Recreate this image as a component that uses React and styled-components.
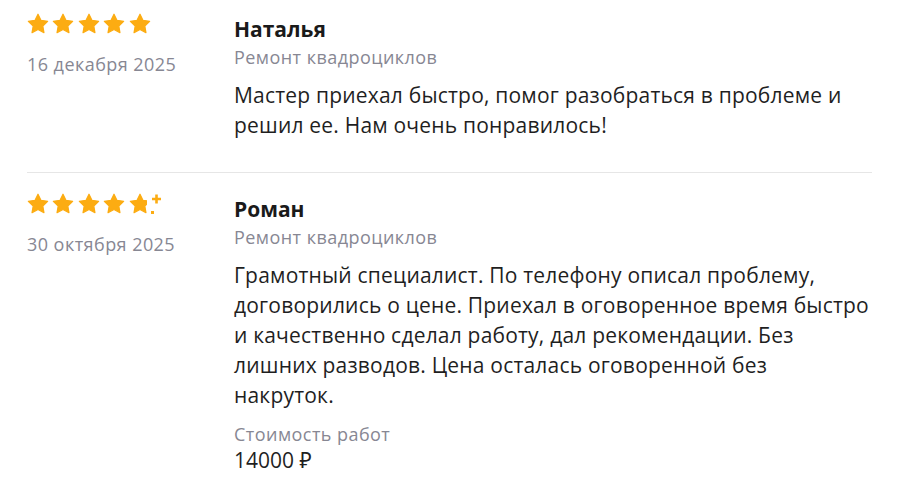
import * as React from "react";
import styled, { createGlobalStyle } from "styled-components";

const reviews = [
  {
    rating: 5,
    date: "16 декабря 2025",
    name: "Наталья",
    service: "Ремонт квадроциклов",
    text: "Мастер приехал быстро, помог разобраться в проблеме и решил ее. Нам очень понравилось!",
  },
  {
    rating: 4.5,
    date: "30 октября 2025",
    name: "Роман",
    service: "Ремонт квадроциклов",
    text: "Грамотный специалист. По телефону описал проблему, договорились о цене. Приехал в оговоренное время быстро и качественно сделал работу, дал рекомендации. Без лишних разводов. Цена осталась оговоренной без накруток.",
    price: "14000 ₽",
  },
];

const STAR = "M12 2.2l2.95 6.1 6.7.95-4.85 4.7 1.15 6.65L12 17.45l-5.95 3.15 1.15-6.65-4.85-4.7 6.7-.95z";

const Star = () => (
  <svg width="24" height="24" viewBox="0 0 24 24">
    <path d={STAR} fill="#fcac12" stroke="#fcac12" strokeWidth="1.2" strokeLinejoin="round" />
  </svg>
);

const HalfStar = () => (
  <svg width="24" height="24" viewBox="0 0 24 24" style={{ overflow: "visible" }}>
    <defs>
      <clipPath id="half">
        <rect x="0" y="0" width="19" height="24" />
      </clipPath>
    </defs>
    <path d={STAR} fill="#fcac12" stroke="#fcac12" strokeWidth="1.2" strokeLinejoin="round" clipPath="url(#half)" />
    <path d="M28.5 2.5v9M24 7h9" stroke="#fcac12" strokeWidth="2.6" />
    <rect x="23" y="19" width="3" height="3" fill="#fcac12" />
  </svg>
);

const Stars = ({ rating }) => {
  const items = [];
  for (let i = 1; i <= 5; i++) {
    items.push(rating >= i ? <Star key={i} /> : <HalfStar key={i} />);
  }
  return <StarRow>{items}</StarRow>;
};

const App = () => {
  return (
    <Root>
      <GlobalStyle />
      {reviews.map((r, i) => (
        <Review key={i} $last={i === reviews.length - 1}>
          <Side>
            <Stars rating={r.rating} />
            <DateText>{r.date}</DateText>
          </Side>
          <Main>
            <Name>{r.name}</Name>
            <Service>{r.service}</Service>
            <Body>{r.text}</Body>
            {r.price && (
              <Price>
                <PriceLabel>Стоимость работ</PriceLabel>
                <PriceValue>{r.price}</PriceValue>
              </Price>
            )}
          </Main>
        </Review>
      ))}
    </Root>
  );
};

const GlobalStyle = createGlobalStyle`
  body {
    margin: 0;
    background: #fff;
    font-family: "Open Sans", "Noto Sans", sans-serif;
    color: #1f1f1f;
  }
`;

const Root = styled.div`
  width: 845px;
  padding: 0 0 0 27px;
`;

const Review = styled.div`
  display: grid;
  grid-template-columns: 207px 1fr;
  padding: 12px 0 ${(p) => (p.$last ? "0" : "32px")};
  border-bottom: ${(p) => (p.$last ? "none" : "1px solid #e6e6e6")};
  & + & {
    padding-top: 19px;
  }
`;

const Side = styled.div`
  display: flex;
  flex-direction: column;
`;

const StarRow = styled.div`
  display: flex;
  gap: 1.5px;
  height: 24px;
  align-items: center;
  margin-left: -1.5px;
`;

const DateText = styled.div`
  margin-top: 15px;
  font-size: 18px;
  line-height: 26px;
  letter-spacing: 0.45px;
  color: #878793;
`;

const Main = styled.div`
  display: flex;
  flex-direction: column;
`;

const Name = styled.div`
  margin-top: 2px;
  font-size: 21px;
  font-weight: 700;
  line-height: 30px;
  color: #1a1a1a;
`;

const Service = styled.div`
  font-size: 18px;
  line-height: 26px;
  letter-spacing: 0.45px;
  color: #878793;
`;

const Body = styled.div`
  margin-top: 10px;
  font-size: 21px;
  line-height: 30px;
  letter-spacing: 0.2px;
  color: #1f1f1f;
`;

const Price = styled.div`
  margin-top: 11px;
  display: flex;
  flex-direction: column;
`;

const PriceLabel = styled.div`
  font-size: 18px;
  line-height: 26px;
  letter-spacing: 0.45px;
  color: #878793;
`;

const PriceValue = styled.div`
  font-size: 21px;
  line-height: 26px;
`;

export default App;
